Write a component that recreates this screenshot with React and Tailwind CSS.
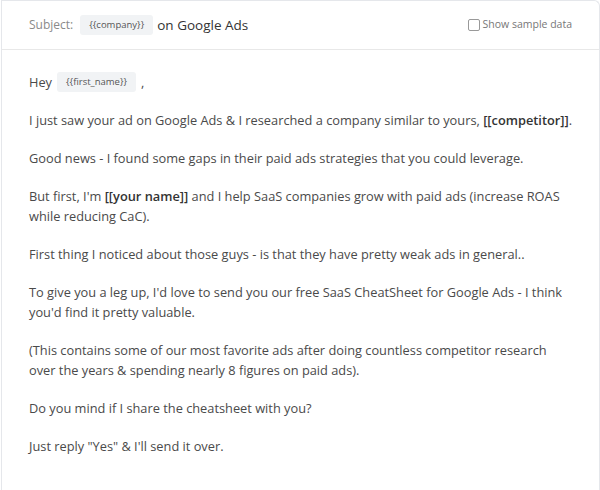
export default function App() {
  const font = { fontFamily: '"Open Sans", "Noto Sans", sans-serif' };

  return (
    <div style={font} className="w-[600px] h-[490px] bg-white overflow-hidden">
      <div className="h-[500px] ml-[1px] border-l border-t border-r border-[#e5e7eb] rounded-tr-[6px]">
        <div className="h-[49px] flex items-center justify-between pl-[27px] pr-[27px] border-b border-[#e8e8e8]">
          <div className="flex items-center">
            <span className="text-[12px] text-[#8a8a8a]">Subject:</span>
            <span className="ml-[7px] h-[20px] px-[9px] flex items-center bg-[#f1f3f5] rounded-[3px] text-[9.5px] text-[#555]">
              {'{{company}}'}
            </span>
            <span className="ml-[4px] text-[13.5px] text-[#333]">on Google Ads</span>
          </div>
          <label className="flex items-center gap-[3px] text-[10.5px] text-[#777]">
            <span className="w-[12px] h-[12px] border border-[#999] rounded-[2px] bg-white" />
            Show sample data
          </label>
        </div>

        <div className="pl-[27px] pr-[12px] pt-[22px] text-[12.8px] leading-[20px] text-[#4a4a4a] flex flex-col gap-[18px]">
          <p className="flex items-center">
            Hey
            <span className="ml-[5px] h-[20px] px-[9px] flex items-center bg-[#f1f3f5] rounded-[3px] text-[9.5px] text-[#555]">
              {'{{first_name}}'}
            </span>
            <span className="ml-[5px]">,</span>
          </p>
          <p>
            I just saw your ad on Google Ads &amp; I researched a company similar to yours,{' '}
            <b className="font-semibold text-[#333]">[[competitor]]</b>.
          </p>
          <p>Good news - I found some gaps in their paid ads strategies that you could leverage.</p>
          <p className="pr-[20px]">
            But first, I'm <b className="font-semibold text-[#333]">[[your name]]</b> and I help SaaS companies grow with paid ads (increase ROAS while reducing CaC).
          </p>
          <p>First thing I noticed about those guys - is that they have pretty weak ads in general..</p>
          <p className="pr-[20px]">
            To give you a leg up, I'd love to send you our free SaaS CheatSheet for Google Ads - I think you'd find it pretty valuable.
          </p>
          <p className="pr-[20px]">
            (This contains some of our most favorite ads after doing countless competitor research over the years &amp; spending nearly 8 figures on paid ads).
          </p>
          <p>Do you mind if I share the cheatsheet with you?</p>
          <p>Just reply "Yes" &amp; I'll send it over.</p>
        </div>
      </div>
    </div>
  );
}
